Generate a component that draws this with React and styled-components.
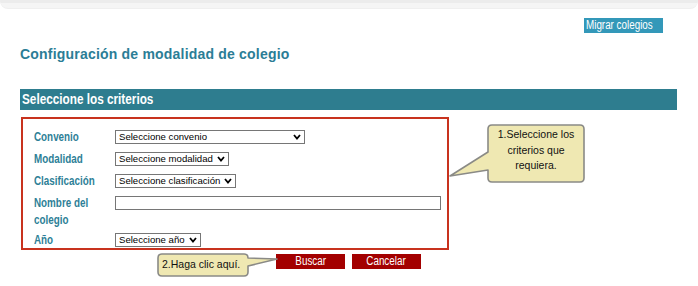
import React from 'react';
import styled, { createGlobalStyle } from 'styled-components';

const GlobalStyle = createGlobalStyle`
  body {
    margin: 0;
    background: #fff;
    font-family: "Liberation Sans", Arial, sans-serif;
  }
`;

const Page = styled.div`
  position: relative;
  width: 698px;
  height: 286px;
  overflow: hidden;
`;

// the original page renders in a narrow face; squeeze Liberation Sans to match
const Narrow = styled.span`
  display: inline-block;
  white-space: nowrap;
  transform: scaleX(${p => p.$k || 0.82});
  transform-origin: ${p => p.$origin || 'left'} center;
`;

const TopStrip = styled.div`
  height: 8px;
  box-sizing: border-box;
  background: #f5f5f5;
  border-top: 3px solid #ececec;
  border-radius: 0 0 10px 10px;
  box-shadow: 0 1px 0 #efefef;
`;

const Toolbar = styled.div`
  display: flex;
  justify-content: flex-end;
  padding: 10px 35px 0 0;
`;

const MigrarButton = styled.button`
  width: 79px;
  height: 15px;
  padding: 0 0 0 2px;
  border: none;
  background: #3398b9;
  color: #fff;
  font-family: "Liberation Sans", Arial, sans-serif;
  font-size: 12px;
  line-height: 15px;
  text-align: left;
  overflow: hidden;
`;

const Title = styled.h2`
  margin: 12px 0 0 20px;
  font-size: 14px;
  line-height: 18px;
  font-weight: bold;
  color: #2b7d96;
  letter-spacing: 0.2px;
`;

const SectionBar = styled.div`
  margin: 26px 0 0 20px;
  width: 657px;
  height: 21px;
  padding-left: 2px;
  box-sizing: border-box;
  background: #2e7d8f;
  color: #fff;
  font-weight: bold;
  font-size: 14px;
  line-height: 21px;
`;

const FormBox = styled.div`
  margin: 7px 0 0 21px;
  width: 428px;
  height: 133px;
  box-sizing: border-box;
  border: 2px solid #c8321e;
  padding: 8px 0 0 11px;
  display: flex;
  flex-direction: column;
  gap: 1px;
`;

const Row = styled.div`
  display: flex;
  align-items: ${p => (p.$top ? 'flex-start' : 'center')};
  padding: ${p => (p.$top ? '2px 0 0' : '2px 0')};
`;

const Label = styled.label`
  width: 81px;
  flex: none;
  font-weight: bold;
  font-size: 12px;
  line-height: 17px;
  color: #2e7f97;
`;

const SelectWrap = styled.span`
  position: relative;
  display: inline-flex;
  margin-top: -2px;
`;

const Select = styled.select`
  appearance: none;
  width: ${p => p.$w}px;
  height: 14px;
  box-sizing: border-box;
  margin: 0;
  padding: 0 10px 0 3px;
  border: 1px solid #767676;
  border-radius: 0;
  background: #fff;
  color: #000;
  font-family: "Liberation Sans", Arial, sans-serif;
  font-size: 9.6px;
  line-height: 12px;
`;

const Chevron = styled.svg`
  position: absolute;
  right: 4px;
  top: 4px;
  pointer-events: none;
`;

const TextInput = styled.input`
  width: 326px;
  height: 14px;
  box-sizing: border-box;
  margin: 1px 0 0;
  padding: 0 2px;
  border: 1px solid #767676;
  border-radius: 0;
`;

const Actions = styled.div`
  display: flex;
  gap: 7px;
  margin: 4px 0 0 276px;
`;

const ActionButton = styled.button`
  width: 69px;
  height: 15px;
  padding: 0;
  border: none;
  background: #a30000;
  color: #fff;
  font-family: "Liberation Sans", Arial, sans-serif;
  font-size: 12px;
  line-height: 15px;
  text-align: center;
`;

const Callout = styled.div`
  position: absolute;
  left: ${p => p.$x}px;
  top: ${p => p.$y}px;
  width: ${p => p.$w}px;
  height: ${p => p.$h}px;
`;

const CalloutText = styled.div`
  position: absolute;
  left: ${p => p.$x}px;
  top: ${p => p.$y}px;
  width: ${p => p.$w}px;
  height: ${p => p.$h}px;
  box-sizing: border-box;
  padding: ${p => p.$pad};
  text-align: ${p => p.$align};
  font-size: 10.5px;
  line-height: 15.5px;
  color: #111;
`;

const Picker = ({ width, placeholder }) => (
  <SelectWrap>
    <Select $w={width} defaultValue="">
      <option value="">{placeholder}</option>
    </Select>
    <Chevron width="8" height="6" viewBox="0 0 8 6">
      <path d="M1 1 L4 4.5 L7 1" fill="none" stroke="#000" strokeWidth="1.8" />
    </Chevron>
  </SelectWrap>
);

const BUBBLE_FILL = '#efe8b2';
const BUBBLE_STROKE = '#8a8a86';

export default function App() {
  return (
    <Page>
      <GlobalStyle />
      <TopStrip />
      <Toolbar>
        <MigrarButton><Narrow>Migrar colegios</Narrow></MigrarButton>
      </Toolbar>
      <Title>Configuración de modalidad de colegio</Title>
      <SectionBar><Narrow $k={0.84}>Seleccione los criterios</Narrow></SectionBar>

      <FormBox>
        <Row>
          <Label><Narrow>Convenio</Narrow></Label>
          <Picker width={190} placeholder="Seleccione convenio" />
        </Row>
        <Row>
          <Label><Narrow>Modalidad</Narrow></Label>
          <Picker width={114} placeholder="Seleccione modalidad" />
        </Row>
        <Row>
          <Label><Narrow>Clasificación</Narrow></Label>
          <Picker width={121} placeholder="Seleccione clasificación" />
        </Row>
        <Row $top>
          <Label><Narrow>Nombre del<br />colegio</Narrow></Label>
          <TextInput type="text" />
        </Row>
        <Row>
          <Label><Narrow>Año</Narrow></Label>
          <Picker width={86} placeholder="Seleccione año" />
        </Row>
      </FormBox>

      <Actions>
        <ActionButton><Narrow $origin="center">Buscar</Narrow></ActionButton>
        <ActionButton><Narrow $origin="center">Cancelar</Narrow></ActionButton>
      </Actions>

      <Callout $x={440} $y={115} $w={150} $h={75}>
        <svg width="150" height="75" viewBox="0 0 150 75">
          <path
            d="M52 10 H140 Q144 10 144 14 V63 Q144 67 140 67 H52 Q48 67 48 63 V55 L10 61 L48 37 V14 Q48 10 52 10 Z"
            fill={BUBBLE_FILL}
            stroke={BUBBLE_STROKE}
            strokeWidth="1.6"
            strokeLinejoin="round"
          />
        </svg>
        <CalloutText $x={48} $y={10} $w={96} $h={57} $pad="2px 2px 0" $align="center">
          1.Seleccione los criterios que requiera.
        </CalloutText>
      </Callout>

      <Callout $x={150} $y={248} $w={135} $h={35}>
        <svg width="135" height="35" viewBox="0 0 135 35">
          <path
            d="M12 6 H94 Q98 6 98 10 L127 11 L98 18 V24 Q98 28 94 28 H12 Q8 28 8 24 V10 Q8 6 12 6 Z"
            fill={BUBBLE_FILL}
            stroke={BUBBLE_STROKE}
            strokeWidth="1.6"
            strokeLinejoin="round"
          />
        </svg>
        <CalloutText $x={8} $y={6} $w={90} $h={22} $pad="3px 0 0 4px" $align="left">
          2.Haga clic aquí.
        </CalloutText>
      </Callout>
    </Page>
  );
}
